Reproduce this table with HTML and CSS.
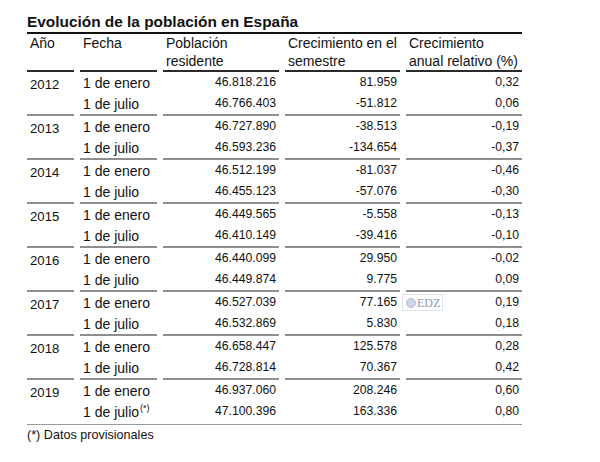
FILE: index.html
```html
<!DOCTYPE html>
<html lang="es">
<head>
<meta charset="utf-8">
<title>Evolución de la población en España</title>
<link rel="stylesheet" href="styles.css">
</head>
<body>
<div class="page">
  <h1 class="title">Evolución de la población en España</h1>
  <div class="table">
    <div class="th">Año</div>
    <div class="th">Fecha</div>
    <div class="th">Población<br>residente</div>
    <div class="th">Crecimiento en el<br>semestre</div>
    <div class="th">Crecimiento<br>anual relativo (%)</div>

    <div class="td year">2012</div>
    <div class="td txt">1 de enero<br>1 de julio</div>
    <div class="td num">46.818.216<br>46.766.403</div>
    <div class="td num">81.959<br>-51.812</div>
    <div class="td num">0,32<br>0,06</div>

    <div class="td year">2013</div>
    <div class="td txt">1 de enero<br>1 de julio</div>
    <div class="td num">46.727.890<br>46.593.236</div>
    <div class="td num">-38.513<br>-134.654</div>
    <div class="td num">-0,19<br>-0,37</div>

    <div class="td year">2014</div>
    <div class="td txt">1 de enero<br>1 de julio</div>
    <div class="td num">46.512.199<br>46.455.123</div>
    <div class="td num">-81.037<br>-57.076</div>
    <div class="td num">-0,46<br>-0,30</div>

    <div class="td year">2015</div>
    <div class="td txt">1 de enero<br>1 de julio</div>
    <div class="td num">46.449.565<br>46.410.149</div>
    <div class="td num">-5.558<br>-39.416</div>
    <div class="td num">-0,13<br>-0,10</div>

    <div class="td year">2016</div>
    <div class="td txt">1 de enero<br>1 de julio</div>
    <div class="td num">46.440.099<br>46.449.874</div>
    <div class="td num">29.950<br>9.775</div>
    <div class="td num">-0,02<br>0,09</div>

    <div class="td year">2017</div>
    <div class="td txt">1 de enero<br>1 de julio</div>
    <div class="td num">46.527.039<br>46.532.869</div>
    <div class="td num">77.165<br>5.830</div>
    <div class="td num">0,19<br>0,18</div>

    <div class="td year">2018</div>
    <div class="td txt">1 de enero<br>1 de julio</div>
    <div class="td num">46.658.447<br>46.728.814</div>
    <div class="td num">125.578<br>70.367</div>
    <div class="td num">0,28<br>0,42</div>

    <div class="td year last">2019</div>
    <div class="td txt last">1 de enero<br>1 de julio<sup class="ast">(*)</sup></div>
    <div class="td num last">46.937.060<br>47.100.396</div>
    <div class="td num last">208.246<br>163.336</div>
    <div class="td num last">0,60<br>0,80</div>
  </div>
  <div class="note">(*) Datos provisionales</div>
</div>
<div class="edz"><span class="edz-dot"></span><span class="edz-text">EDZ</span></div>
</body>
</html>
```

FILE: styles.css
```css
html, body {
  margin: 0;
  padding: 0;
  background: #ffffff;
}

body {
  font-family: "Liberation Sans", Arial, sans-serif;
  color: #111111;
}

.page {
  width: 495px;
  margin-left: 27px;
  padding-top: 13px;
}

.title {
  margin: 0;
  padding-bottom: 1px;
  font-size: 15.4px;
  line-height: 18px;
  font-weight: bold;
  color: #111111;
  border-bottom: 2px solid #111111;
}

.table {
  display: grid;
  grid-template-columns: 47px 77px 116px 115px 116px;
  column-gap: 6px;
}

.th {
  box-sizing: border-box;
  height: 38px;
  padding-left: 3px;
  font-size: 14px;
  line-height: 18px;
  border-bottom: 2px solid #2a2a2a;
  white-space: nowrap;
}

.td {
  box-sizing: border-box;
  height: 44px;
  border-bottom: 2px solid #8e8e8e;
  line-height: 21px;
  white-space: nowrap;
}

.td.last {
  border-bottom: none;
}

.year {
  font-size: 13.2px;
  padding-left: 3px;
  padding-top: 2px;
}

.txt {
  font-size: 14px;
  padding-left: 3px;
  padding-top: 1px;
}

.num {
  font-size: 12.2px;
  text-align: right;
  padding-right: 3px;
  padding-top: 0;
}

.ast {
  font-size: 9px;
  line-height: 0;
  vertical-align: 6px;
  margin-left: 1px;
}

.note {
  border-top: 1px solid #9a9a9a;
  padding-top: 2px;
  font-size: 12.6px;
  line-height: 16px;
}

.edz {
  position: absolute;
  left: 402px;
  top: 294px;
  box-sizing: border-box;
  width: 41px;
  height: 17px;
  border: 1px solid #dfe4ec;
  background: rgba(255, 255, 255, 0.85);
  display: flex;
  align-items: center;
  gap: 1px;
  padding-left: 3px;
}

.edz-dot {
  box-sizing: border-box;
  width: 10px;
  height: 10px;
  border-radius: 50%;
  background: #cdd6e7;
  border: 1px solid #aebbd3;
}

.edz-text {
  font-family: "Liberation Serif", "Times New Roman", serif;
  font-size: 12px;
  line-height: 14px;
  color: #8898b6;
}
```
